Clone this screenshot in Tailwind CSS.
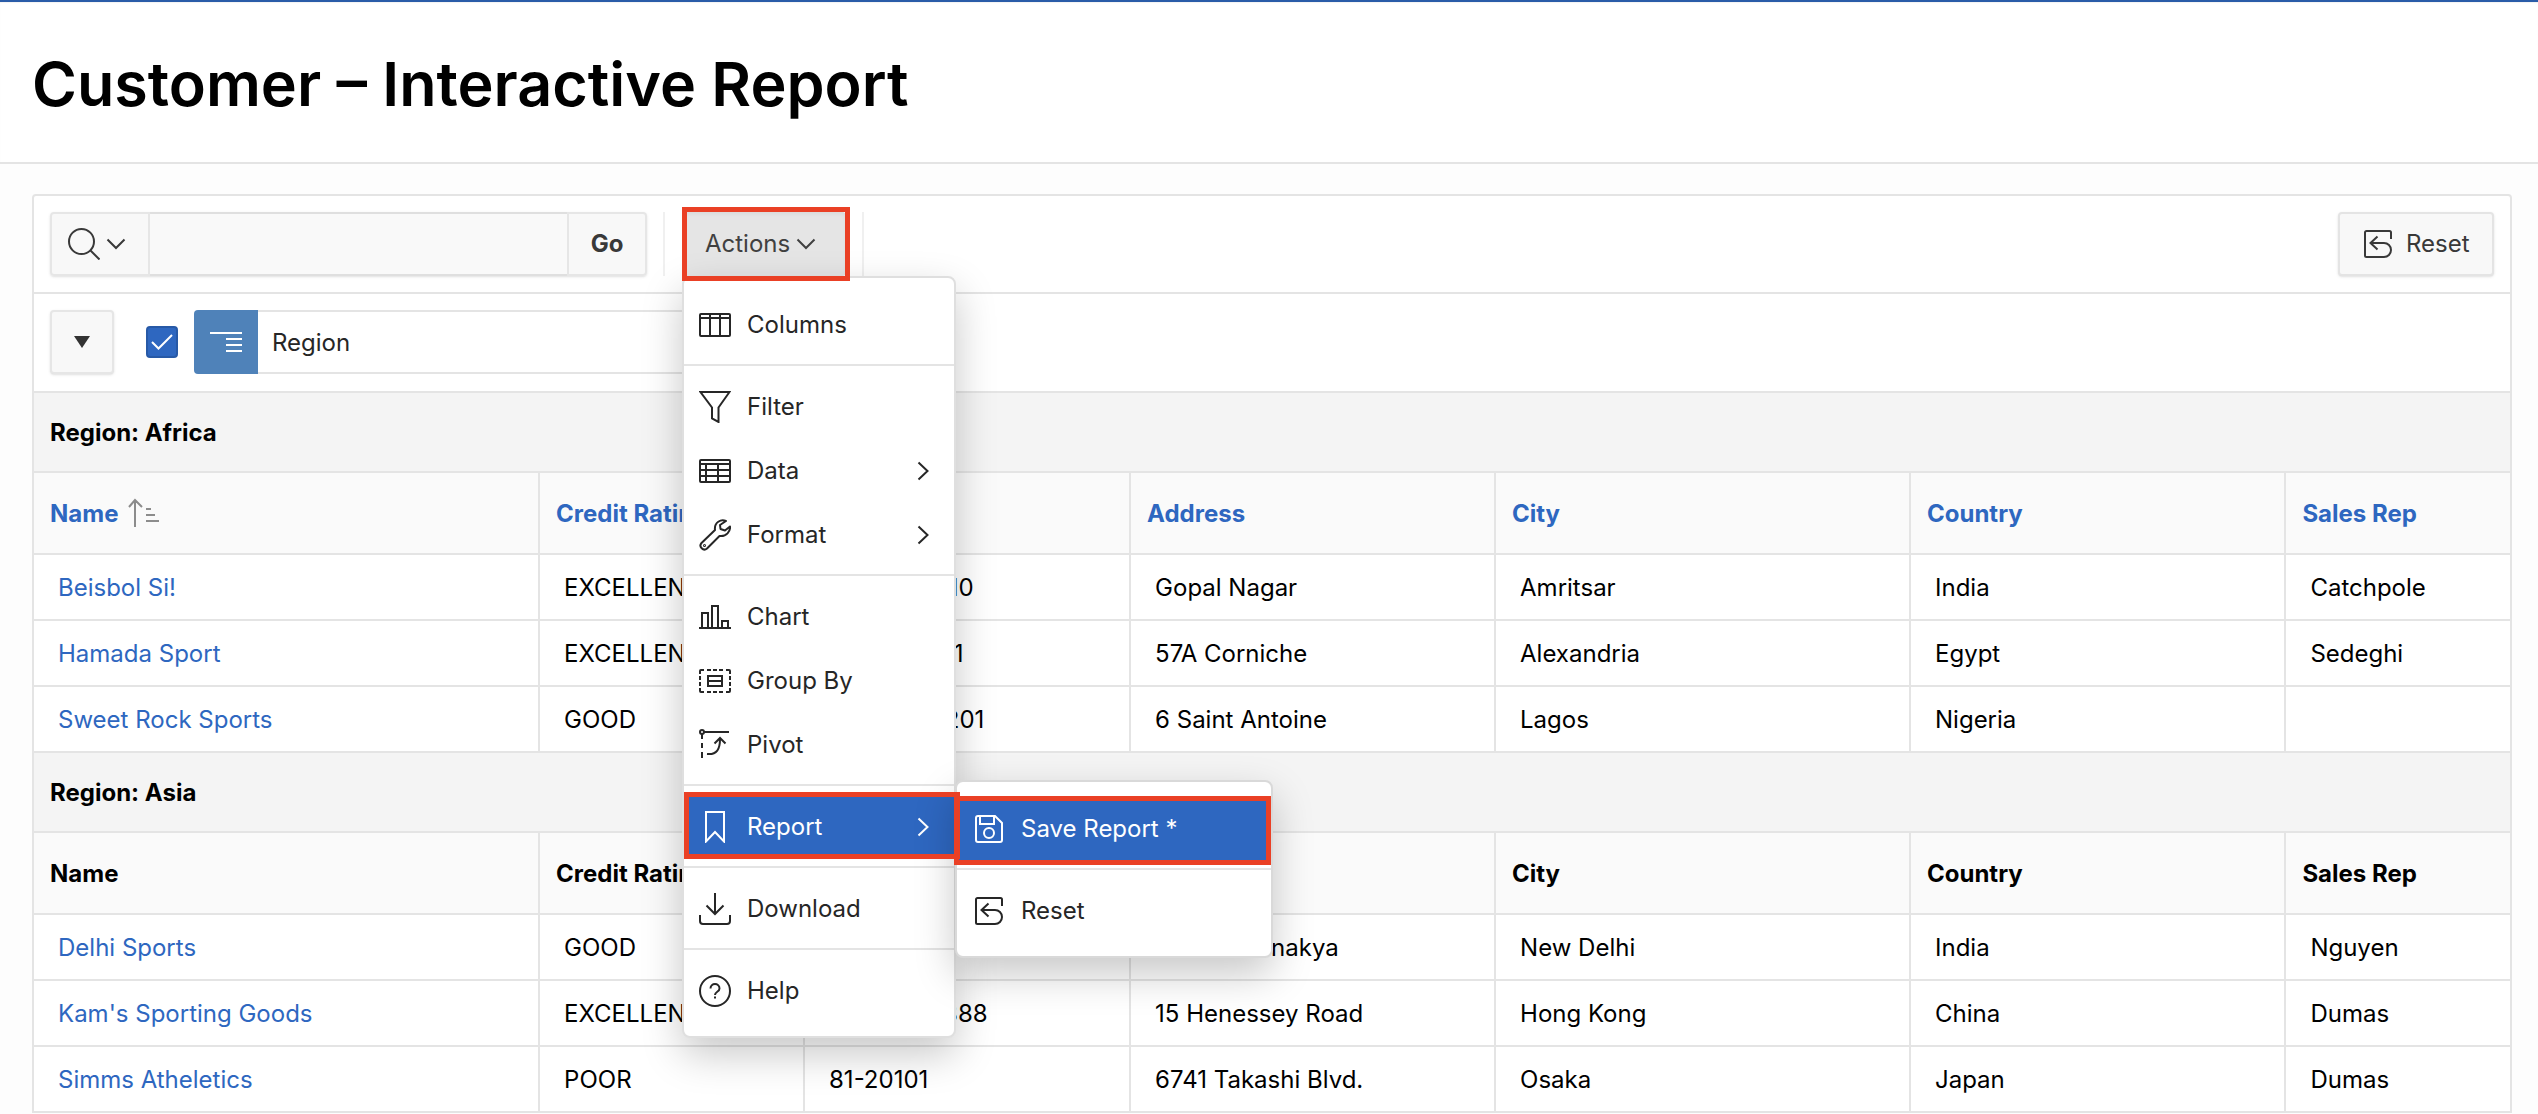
<!DOCTYPE html>
<html lang="en">
<head>
<meta charset="utf-8">
<title>Customer – Interactive Report</title>
<script src="https://cdn.jsdelivr.net/npm/@tailwindcss/browser@4"></script>
</head>
<body class="min-h-screen bg-[#fdfdfd] font-['Inter',sans-serif] text-2xl leading-8 text-black">
<svg class="hidden" aria-hidden="true">
  <symbol id="reset" viewBox="0 0 32 32"><path d="M29 11V4.500a1.500 1.500 0 0 0-1.500-1.500H4.500A1.500 1.500 0 0 0 3 4.500v23A1.500 1.500 0 0 0 4.500 29H22a7 7 0 0 0 0-14H8M15.500 8.500 8.500 15l7 6.500"/></symbol>
  <symbol id="right" viewBox="0 0 12 20"><path d="m1.500 1.500 9 8.500-9 8.500"/></symbol>
  <symbol id="down" viewBox="0 0 20 12"><path d="m1.500 1.500 8.500 8.500 8.500-8.500"/></symbol>
</svg>
<header class="border-t-2 border-b-2 border-t-[#2a5ca8] border-b-[#e4e4e4] bg-white px-8 pt-[42px] pb-[38px] inset-shadow-xs">
  <h1 class="text-[61px] leading-20 font-semibold">Customer – Interactive Report</h1>
</header>

<main class="pt-[30px] pr-[26px] pl-8">
  <div class="rounded-t-sm border-2 border-[#e4e4e4] bg-white">
    <div class="flex h-[98px] items-start border-b-2 border-[#e4e4e4] p-4">
      <form class="flex h-16 rounded-sm shadow-sm">
        <button type="button" aria-label="Select columns to search" class="flex w-[100px] items-center gap-1.5 rounded-l-sm border-2 border-[#e6e6e6] bg-[#f8f8f8] pl-4 text-[#393939]">
          <svg class="size-8 fill-none stroke-current stroke-2" viewBox="0 0 32 32"><circle cx="13.500" cy="13.500" r="12.500"/><path d="m22.500 22.500 9 9"/></svg>
          <svg class="h-3 w-5 fill-none stroke-current stroke-2"><use href="#down"/></svg>
        </button>
        <input type="text" aria-label="Search report" class="w-[417px] border-y-2 border-[#dfdfdf] bg-[#f9f9f9] px-4">
        <button type="button" class="w-20 rounded-r-sm border-2 border-[#e6e6e6] bg-[#f8f8f8] font-bold text-[#393939]">Go</button>
      </form>
      <div class="relative ml-4 h-16 border-x-2 border-[#f0f0f0] pr-4 pl-[17px]">
        <button type="button" aria-expanded="true" class="flex h-16 w-[164px] items-center gap-1.5 rounded-sm bg-[#e5e5e5] pl-[23px] text-[#404040] inset-shadow-sm">Actions
          <svg class="h-3 w-5 fill-none stroke-current stroke-2"><use href="#down"/></svg>
        </button>
        <span class="pointer-events-none absolute -top-[5px] left-[17px] z-20 h-[74px] w-[168px] border-5 border-[#ea4025]"></span>

        <ul class="absolute top-16 left-[17px] z-10 w-[274px] rounded-lg border-2 border-[#dfdfdf] bg-white py-3.5 text-[#262626] shadow-[0_16px_40px_rgba(0,0,0,0.22)]">
          <li><button type="button" class="flex h-16 w-full items-center gap-4 pt-0.5 pl-[15px]">
            <svg class="size-8 fill-none stroke-current stroke-2" viewBox="0 0 32 32"><rect x="1" y="5" width="30" height="22" rx="1"/><path d="M1 9h30M11 9v18M21 9v18M11 5v4M21 5v4"/></svg>Columns</button></li>
          <li class="my-2 border-t-2 border-[#e4e4e4]"></li>
          <li><button type="button" class="flex h-16 w-full items-center gap-4 pt-0.5 pl-[15px]">
            <svg class="size-8 fill-none stroke-current stroke-2" viewBox="0 0 32 32"><path d="M1.500 1h29L19.500 16.500v14.500L13 27.500v-11Z"/></svg>Filter</button></li>
          <li><button type="button" class="flex h-16 w-full items-center gap-4 pt-0.5 pr-[25px] pl-[15px]">
            <svg class="size-8 fill-none stroke-current stroke-2" viewBox="0 0 32 32"><rect x="1" y="5" width="30" height="22" rx="1"/><path d="M1 9h30M1 15h30M1 21h30M7 9v18M19 9v18"/></svg>Data
            <svg class="ml-auto h-5 w-3 fill-none stroke-current stroke-2"><use href="#right"/></svg></button></li>
          <li><button type="button" class="flex h-16 w-full items-center gap-4 pt-0.5 pr-[25px] pl-[15px]">
            <svg class="size-8 fill-none stroke-current stroke-2" viewBox="0 0 32 32"><path stroke-linejoin="round" d="M27 2C22 0 15 3 16 11L2.500 24a3.900 3.900 0 0 0 5.500 5.500L20.500 17c7 1 11-5 10.500-9.500l-5 4-4.500-1.500-.5-4Z"/><circle cx="5.500" cy="26.500" r=".5"/></svg>Format
            <svg class="ml-auto h-5 w-3 fill-none stroke-current stroke-2"><use href="#right"/></svg></button></li>
          <li class="my-2 border-t-2 border-[#e4e4e4]"></li>
          <li><button type="button" class="flex h-16 w-full items-center gap-4 pt-0.5 pl-[15px]">
            <svg class="size-8 fill-none stroke-current stroke-2" viewBox="0 0 32 32"><path d="M0 27h32M3 27V12h6v15M13 27V5h6v22M23 27v-7h6v7"/></svg>Chart</button></li>
          <li><button type="button" class="flex h-16 w-full items-center gap-4 pt-0.5 pl-[15px]">
            <svg class="size-8 fill-none stroke-current stroke-2" viewBox="0 0 32 32"><path d="M1 9V6a1 1 0 0 1 1-1h3M27 5h3a1 1 0 0 1 1 1v3M31 23v3a1 1 0 0 1-1 1h-3M5 27H2a1 1 0 0 1-1-1v-3M8 5h4M14 5h4M20 5h4M8 27h4M14 27h4M20 27h4M1 11v4M1 17v4M31 11v4M31 17v4M9 11h14v10H9ZM9 16h14"/></svg>Group By</button></li>
          <li><button type="button" class="flex h-16 w-full items-center gap-4 pt-0.5 pl-[15px]">
            <svg class="size-8 fill-none stroke-current stroke-2" viewBox="0 0 32 32"><circle cx="3" cy="3" r="2"/><path d="M5 3h25M3 5v5M3 14v5M3 23v6M8 25c10 1 13-5 13-15M15.500 14.500 21 9l5.500 5.500"/></svg>Pivot</button></li>
          <li class="my-2 border-t-2 border-[#e4e4e4]"></li>
          <li class="relative"><button type="button" aria-expanded="true" class="flex h-16 w-full items-center gap-4 bg-[#2e67c0] pt-0.5 pr-[25px] pl-[15px] text-white">
            <svg class="size-8 fill-none stroke-current stroke-2" viewBox="0 0 32 32"><path d="M7 1h18v29.500L16 21l-9 9.500Z"/></svg>Report
            <svg class="ml-auto h-5 w-3 fill-none stroke-current stroke-2"><use href="#right"/></svg></button>
            <span class="pointer-events-none absolute -top-0.5 left-0 z-10 h-[67px] w-[276px] border-5 border-[#ea4025]"></span>
            <ul class="absolute -top-3.5 left-full ml-px w-[318px] rounded-lg border-2 border-[#d9d9d9] bg-white py-3.5 shadow-[0_16px_40px_rgba(0,0,0,0.22)]">
              <li class="relative"><button type="button" class="flex h-16 w-full items-center gap-4 bg-[#2e67c0] pt-0.5 pl-4 text-white">
                <svg class="size-8 fill-none stroke-current stroke-2" viewBox="0 0 32 32"><path d="M5 3h17l7 7v17a2 2 0 0 1-2 2H5a2 2 0 0 1-2-2V5a2 2 0 0 1 2-2ZM7 3v8h14V3"/><circle cx="16" cy="20" r="5"/></svg>Save Report *</button>
                <span class="pointer-events-none absolute top-0 -left-[3px] h-[69px] w-[317px] border-5 border-[#ea4025]"></span></li>
              <li class="my-2 border-t-2 border-[#e4e4e4]"></li>
              <li><button type="button" class="flex h-16 w-full items-center gap-4 pt-0.5 pl-4">
                <svg class="size-8 fill-none stroke-current stroke-2"><use href="#reset"/></svg>Reset</button></li>
            </ul>
          </li>
          <li class="my-2 border-t-2 border-[#e4e4e4]"></li>
          <li><button type="button" class="flex h-16 w-full items-center gap-4 pt-0.5 pl-[15px]">
            <svg class="size-8 fill-none stroke-current stroke-2" viewBox="0 0 32 32"><path d="M16 0v21M7.500 12.500 16 21l8.500-8.500M1 22v6a3 3 0 0 0 3 3h24a3 3 0 0 0 3-3v-6"/></svg>Download</button></li>
          <li class="my-2 border-t-2 border-[#e4e4e4]"></li>
          <li><button type="button" class="flex h-16 w-full items-center gap-4 pt-0.5 pl-[15px]">
            <svg class="size-8 fill-none stroke-current stroke-2" viewBox="0 0 32 32"><circle cx="16" cy="16" r="15"/><path d="M11.500 13.500c0-6 9-6 9 0 0 3.500-4.500 3-4.500 6.500M16 21.500v2"/></svg>Help</button></li>
        </ul>
      </div>
      <button type="button" class="ml-auto flex h-16 w-[156px] items-center gap-3 rounded-sm border-2 border-[#e4e4e4] bg-[#f8f8f8] pl-[22px] text-[#393939] shadow-sm">
        <svg class="size-8 fill-none stroke-current stroke-2"><use href="#reset"/></svg>Reset</button>
    </div>

    <div class="flex h-[99px] items-start border-b-2 border-[#e4e4e4] p-4">
      <button type="button" aria-label="Report settings" class="flex size-16 items-center justify-center rounded-sm border-2 border-[#e6e6e6] bg-[#f8f8f8] shadow-sm">
        <svg class="h-3 w-4 fill-[#333333]" viewBox="0 0 16 12"><path d="M0 0h16L8 12Z"/></svg></button>
      <label class="relative mt-4 ml-8 flex size-8">
        <input type="checkbox" checked aria-label="Enable Region control break" class="size-8 appearance-none rounded-sm border-2 border-[#2759a6] bg-[#2e67c0]">
        <svg class="pointer-events-none absolute inset-0 size-8 fill-none stroke-white stroke-2" viewBox="0 0 32 32"><path d="m6 16 6.500 6.500L26 9"/></svg>
      </label>
      <div class="ml-4 flex h-16 w-[520px] items-center">
        <span class="flex size-16 items-center justify-center rounded-l-sm bg-[#4f82b9]"><svg class="size-8 fill-none stroke-white stroke-2" viewBox="0 0 32 32"><path d="M0 7h32M16 13h16M16 19h16M16 25h16"/></svg></span>
        <a href="#" class="flex h-16 grow items-center rounded-r-sm border-2 border-l-0 border-[#e4e4e4] px-3.5 pt-0.5 text-[#262626]">Region</a>
      </div>
    </div>

    <table class="w-full table-fixed border-separate border-spacing-0 text-left [&_.g]:h-20 [&_.g]:bg-[#f4f4f4] [&_.h_th]:h-[82px] [&_.h_th]:bg-[#fafafa] [&_a]:text-[#2e67c0] [&_td]:h-[66px] [&_td]:border-r-2 [&_td]:border-b-2 [&_td]:border-[#e4e4e4] [&_td]:px-6 [&_td]:pt-0.5 [&_th]:border-r-2 [&_th]:border-b-2 [&_th]:border-[#e4e4e4] [&_th]:px-4 [&_th]:pt-0.5 [&_th]:font-bold [&_td:last-child]:border-r-0 [&_th:last-child]:border-r-0 [&_tr:last-child_td]:h-16 [&_tr:last-child_td]:border-b-0">
      <colgroup><col class="w-[20.44%]"><col class="w-[10.7%]"><col class="w-[13.17%]"><col class="w-[14.74%]"><col class="w-[16.76%]"><col class="w-[15.16%]"><col></colgroup>
      <tbody>
        <tr><th colspan="7" class="g">Region: Africa</th></tr>
        <tr class="h"><th><a href="#" class="inline-flex items-center gap-2.5">Name<svg class="size-8 fill-none stroke-[#8c8c8c] stroke-2" viewBox="0 0 32 32"><path d="M7 29V2M1 9l6-7 7 7M18 11h5M18 17h9M18 23h13"/></svg></a></th><th class="whitespace-nowrap"><a href="#">Credit Rating</a></th><th><a href="#">Phone</a></th><th><a href="#">Address</a></th><th><a href="#">City</a></th><th><a href="#">Country</a></th><th><a href="#">Sales Rep</a></th></tr>
        <tr><td><a href="#">Beisbol Si!</a></td><td>EXCELLENT</td><td>91-41562010</td><td>Gopal Nagar</td><td>Amritsar</td><td>India</td><td>Catchpole</td></tr>
        <tr><td><a href="#">Hamada Sport</a></td><td>EXCELLENT</td><td>20-1209281</td><td>57A Corniche</td><td>Alexandria</td><td>Egypt</td><td>Sedeghi</td></tr>
        <tr><td><a href="#">Sweet Rock Sports</a></td><td>GOOD</td><td>234-6036201</td><td>6 Saint Antoine</td><td>Lagos</td><td>Nigeria</td><td></td></tr>
        <tr><th colspan="7" class="g">Region: Asia</th></tr>
        <tr class="h"><th>Name</th><th class="whitespace-nowrap">Credit Rating</th><th>Phone</th><th>Address</th><th>City</th><th>Country</th><th>Sales Rep</th></tr>
        <tr><td><a href="#">Delhi Sports</a></td><td>GOOD</td><td>91-10351</td><td>11368 Chanakya</td><td>New Delhi</td><td>India</td><td>Nguyen</td></tr>
        <tr><td><a href="#">Kam's Sporting Goods</a></td><td>EXCELLENT</td><td>852-3692888</td><td>15 Henessey Road</td><td>Hong Kong</td><td>China</td><td>Dumas</td></tr>
        <tr><td><a href="#">Simms Atheletics</a></td><td>POOR</td><td>81-20101</td><td>6741 Takashi Blvd.</td><td>Osaka</td><td>Japan</td><td>Dumas</td></tr>
      </tbody>
    </table>
  </div>
</main>
</body>
</html>
